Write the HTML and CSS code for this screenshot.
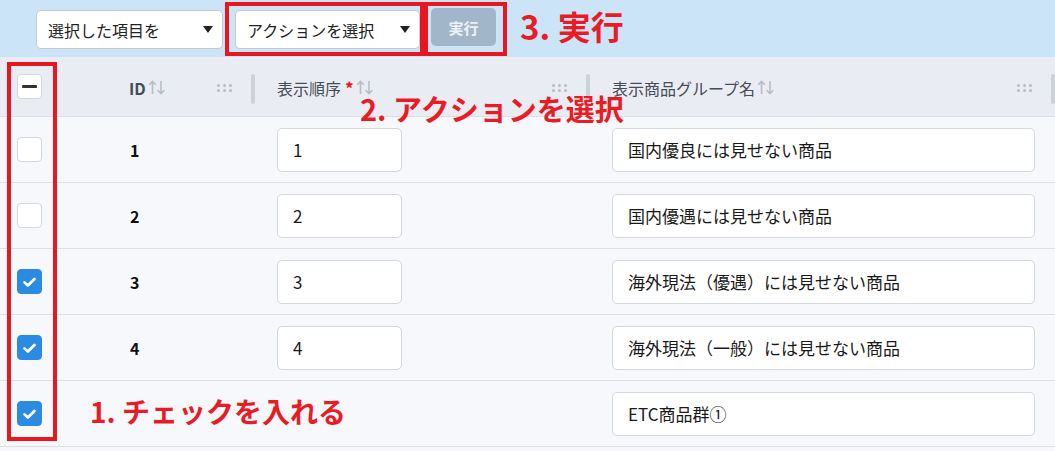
FILE: index.html
```html
<!DOCTYPE html>
<html lang="ja">
<head>
<meta charset="utf-8">
<link rel="stylesheet" href="styles.css">
</head>
<body>
<div class="page">
  <div class="toolbar">
    <div class="select sel1"><span>選択した項目を</span><span class="caret"></span></div>
    <div class="select sel2"><span>アクションを選択</span><span class="caret"></span></div>
    <button class="run">実行</button>
  </div>

  <div class="table">
    <div class="row head">
      <div class="cell c-check"><span class="cb cb-minus"><span class="minus"></span></span></div>
      <div class="cell hcell c-id">
        <span class="htext bold">ID</span>
        <svg class="sort" width="18" height="15" viewBox="0 0 18 15"><path d="M4.5 1.5V14M1.2 4.8L4.5 1.5L7.8 4.8M13 1V13.5M9.7 10.2L13 13.5L16.3 10.2" fill="none" stroke="#b7bdc6" stroke-width="1.6"/></svg>
        <span class="grow"></span>
        <svg class="dots" width="15" height="8" viewBox="0 0 15 8"><g fill="#b6bbc4"><circle cx="1.5" cy="1.5" r="1.5"/><circle cx="7.5" cy="1.5" r="1.5"/><circle cx="13.5" cy="1.5" r="1.5"/><circle cx="1.5" cy="6.5" r="1.5"/><circle cx="7.5" cy="6.5" r="1.5"/><circle cx="13.5" cy="6.5" r="1.5"/></g></svg>
        <span class="sep"></span>
      </div>
      <div class="cell hcell c-order">
        <span class="htext">表示順序</span><span class="req">*</span>
        <svg class="sort" width="18" height="15" viewBox="0 0 18 15"><path d="M4.5 1.5V14M1.2 4.8L4.5 1.5L7.8 4.8M13 1V13.5M9.7 10.2L13 13.5L16.3 10.2" fill="none" stroke="#b7bdc6" stroke-width="1.6"/></svg>
        <span class="grow"></span>
        <svg class="dots" width="15" height="8" viewBox="0 0 15 8"><g fill="#b6bbc4"><circle cx="1.5" cy="1.5" r="1.5"/><circle cx="7.5" cy="1.5" r="1.5"/><circle cx="13.5" cy="1.5" r="1.5"/><circle cx="1.5" cy="6.5" r="1.5"/><circle cx="7.5" cy="6.5" r="1.5"/><circle cx="13.5" cy="6.5" r="1.5"/></g></svg>
        <span class="sep"></span>
      </div>
      <div class="cell hcell c-name">
        <span class="htext">表示商品グループ名</span>
        <svg class="sort" width="18" height="15" viewBox="0 0 18 15"><path d="M4.5 1.5V14M1.2 4.8L4.5 1.5L7.8 4.8M13 1V13.5M9.7 10.2L13 13.5L16.3 10.2" fill="none" stroke="#b7bdc6" stroke-width="1.6"/></svg>
        <span class="grow"></span>
        <svg class="dots" width="15" height="8" viewBox="0 0 15 8"><g fill="#b6bbc4"><circle cx="1.5" cy="1.5" r="1.5"/><circle cx="7.5" cy="1.5" r="1.5"/><circle cx="13.5" cy="1.5" r="1.5"/><circle cx="1.5" cy="6.5" r="1.5"/><circle cx="7.5" cy="6.5" r="1.5"/><circle cx="13.5" cy="6.5" r="1.5"/></g></svg>
        <span class="sep"></span>
      </div>
    </div>

    <div class="row body">
      <div class="cell c-check"><span class="cb"></span></div>
      <div class="cell c-id"><span class="idval">1</span></div>
      <div class="cell c-order"><div class="input in-order">1</div></div>
      <div class="cell c-name"><div class="input in-name">国内優良には見せない商品</div></div>
    </div>
    <div class="row body">
      <div class="cell c-check"><span class="cb"></span></div>
      <div class="cell c-id"><span class="idval">2</span></div>
      <div class="cell c-order"><div class="input in-order">2</div></div>
      <div class="cell c-name"><div class="input in-name">国内優遇には見せない商品</div></div>
    </div>
    <div class="row body">
      <div class="cell c-check"><span class="cb checked"><svg width="24" height="24" viewBox="0 0 24 24"><path d="M6.8 12.4L10.3 15.6L17.2 8.8" fill="none" stroke="#fff" stroke-width="2.8" stroke-linecap="round" stroke-linejoin="round"/></svg></span></div>
      <div class="cell c-id"><span class="idval">3</span></div>
      <div class="cell c-order"><div class="input in-order">3</div></div>
      <div class="cell c-name"><div class="input in-name">海外現法（優遇）には見せない商品</div></div>
    </div>
    <div class="row body">
      <div class="cell c-check"><span class="cb checked"><svg width="24" height="24" viewBox="0 0 24 24"><path d="M6.8 12.4L10.3 15.6L17.2 8.8" fill="none" stroke="#fff" stroke-width="2.8" stroke-linecap="round" stroke-linejoin="round"/></svg></span></div>
      <div class="cell c-id"><span class="idval">4</span></div>
      <div class="cell c-order"><div class="input in-order">4</div></div>
      <div class="cell c-name"><div class="input in-name">海外現法（一般）には見せない商品</div></div>
    </div>
    <div class="row body last">
      <div class="cell c-check"><span class="cb checked"><svg width="24" height="24" viewBox="0 0 24 24"><path d="M6.8 12.4L10.3 15.6L17.2 8.8" fill="none" stroke="#fff" stroke-width="2.8" stroke-linecap="round" stroke-linejoin="round"/></svg></span></div>
      <div class="cell c-id"><span class="idval"></span></div>
      <div class="cell c-order"></div>
      <div class="cell c-name"><div class="input in-name">ETC商品群①</div></div>
    </div>
  </div>

  <div class="ann-box box-check"></div>
  <div class="ann-box box-action"></div>
  <div class="ann-box box-run"></div>
  <div class="ann-label lab-1">1. チェックを入れる</div>
  <div class="ann-label lab-2">2. アクションを選択</div>
  <div class="ann-label lab-3">3. 実行</div>
</div>
</body>
</html>
```

FILE: styles.css
```css
* { box-sizing: border-box; }
html, body { margin: 0; padding: 0; }
body {
  font-family: "Noto Sans CJK JP", "Noto Sans", sans-serif;
  color: #222;
  background: #f7f8fc;
  width: 1055px;
  height: 451px;
  overflow: hidden;
}
.page { position: relative; width: 1055px; height: 451px; }

.toolbar {
  height: 57px;
  background: #cce4f8;
  display: flex;
  align-items: flex-start;
  padding: 8px 0 0 36px;
  gap: 12px;
}
.select {
  margin-top: 2px;
  height: 39px;
  background: #fff;
  border: 1px solid #c4cad3;
  border-radius: 5px;
  display: flex;
  align-items: center;
  justify-content: space-between;
  padding: 0 9px 0 11px;
  font-size: 16px;
  color: #222;
}
.sel1 { width: 187px; }
.sel2 { width: 185px; }
.caret {
  width: 0; height: 0;
  border-left: 5px solid transparent;
  border-right: 5px solid transparent;
  border-top: 7px solid #222;
}
.run {
  margin-left: -1px;
  width: 65px;
  height: 38px;
  border: none;
  border-radius: 5px;
  background: #a2b6c9;
  color: #eef2f6;
  font-family: inherit;
  font-size: 15px;
  font-weight: 700;
  padding: 0;
}

.table { display: flex; flex-direction: column; }
.row {
  display: grid;
  grid-template-columns: 105px 150px 335px 465px;
}
.head { height: 59px; background: #e9ecf3; }
.body {
  height: 66px;
  border-top: 1px solid #dcdfe6;
  background: #f7f8fc;
}
.body.last { height: 67px; border-bottom: 1px solid #dcdfe6; }

.cell { display: flex; align-items: center; min-width: 0; }
.c-check { padding-left: 17px; }
.c-id { padding-left: 24px; }
.c-order, .c-name { padding-left: 22px; }
.hcell { padding-top: 2px; }
.htext { font-size: 16px; color: #454c57; }
.htext.bold { font-weight: 700; }
.req { color: #ee1111; font-weight: 700; font-size: 17px; margin-left: 4px; }
.sort { margin-left: 2px; }
.grow { flex: 1; }
.dots { margin-right: 19px; margin-top: 1px; }
.sep {
  width: 4px;
  height: 30px;
  border-radius: 2px;
  background: #cdd1d8;
  margin-top: 2px;
}

.cb {
  width: 25px; height: 25px;
  border-radius: 4px;
  background: #fff;
  border: 1px solid #d3d7de;
  display: flex; align-items: center; justify-content: center;
}
.cb.checked { background: #2b8be2; border-color: #2b8be2; }
.cb.checked svg { display: block; }
.minus { width: 15px; height: 3px; background: #333; border-radius: 1px; }

.idval { font-size: 16px; font-weight: 700; color: #111; margin-left: 1px; }

.input {
  height: 44px;
  background: #fff;
  border: 1px solid #d3d7de;
  border-radius: 5px;
  display: flex;
  align-items: center;
  padding-left: 15px;
  font-size: 17px;
  color: #1a1a1a;
}
.in-order { width: 125px; }
.in-name { width: 423px; }

.ann-box {
  position: absolute;
  border: 4px solid #e8161f;
}
.box-check { left: 7px; top: 62px; width: 50px; height: 379px; }
.box-action { left: 225px; top: 2px; width: 199px; height: 54px; }
.box-run { left: 424px; top: 2px; width: 83px; height: 54px; }

.ann-label {
  position: absolute;
  color: #e91c25;
  font-weight: 700;
  line-height: 1;
  white-space: nowrap;
}
.lab-1 { left: 90px; top: 397px; font-size: 28px; }
.lab-2 { left: 360px; top: 94px; font-size: 29px; }
.lab-3 { left: 520px; top: 10px; font-size: 33px; }
```
